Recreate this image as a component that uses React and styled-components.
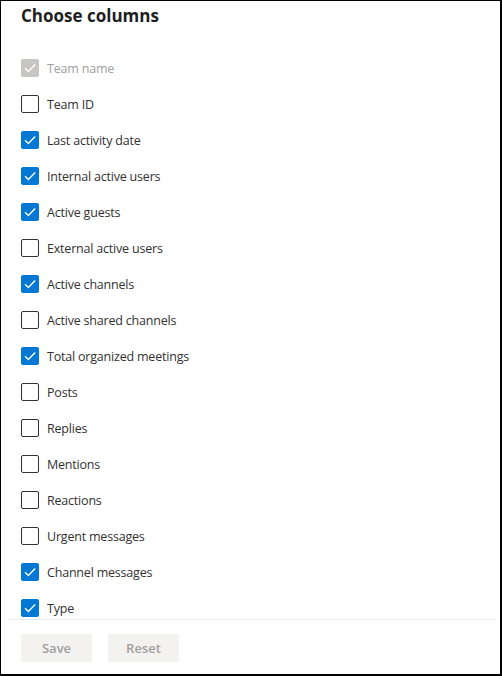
import React, { useState } from 'react'
import styled, { createGlobalStyle } from 'styled-components'

const GlobalStyle = createGlobalStyle`
html, body {
    margin: 0;
    padding: 0;
    background: #ffffff;
}
body {
    font-family: 'Open Sans', 'Liberation Sans', sans-serif;
    color: #323130;
}
`

const Panel = styled.div`
box-sizing: border-box;
width: 502px;
height: 676px;
display: flex;
flex-direction: column;
background: #ffffff;
border-style: solid;
border-color: #000000;
border-width: 1px 2px 2px 1px;
overflow: hidden;
`

const Header = styled.div`
height: 49px;
flex: none;
padding: 3px 0 0 20px;
box-sizing: border-box;
h1{
    margin: 0;
    font-size: 17px;
    line-height: 24px;
    font-weight: 700;
    color: #201f1e;
}
`

const List = styled.div`
flex: 1;
overflow: hidden;
`

const Row = styled.label`
display: flex;
align-items: center;
height: 36px;
padding-left: 20px;
gap: 8px;
cursor: ${props => props.disabled ? 'default' : 'pointer'};
font-size: 12.5px;
letter-spacing: -0.2px;
color: ${props => props.disabled ? '#a19f9d' : '#323130'};
`

const Box = styled.span`
box-sizing: border-box;
width: 18px;
height: 18px;
border-radius: 2px;
display: flex;
align-items: center;
justify-content: center;
border: 1px solid ${props => props.disabled ? '#c8c6c4' : props.checked ? '#0078d4' : '#323130'};
background: ${props => props.disabled ? '#c8c6c4' : props.checked ? '#0078d4' : '#ffffff'};
`

const Footer = styled.div`
flex: none;
display: flex;
gap: 16px;
margin: 0 4px 0 7px;
padding: 14px 0 12px 13px;
border-top: 1px solid #edebe9;
`

const Button = styled.button`
width: 71px;
height: 28px;
border: none;
border-radius: 2px;
background: #f3f2f1;
color: #a19f9d;
font-family: 'Open Sans', 'Liberation Sans', sans-serif;
font-size: 13px;
font-weight: 600;
padding: 0;
`

const columns = [
    { name: 'Team name', checked: true, disabled: true },
    { name: 'Team ID', checked: false },
    { name: 'Last activity date', checked: true },
    { name: 'Internal active users', checked: true },
    { name: 'Active guests', checked: true },
    { name: 'External active users', checked: false },
    { name: 'Active channels', checked: true },
    { name: 'Active shared channels', checked: false },
    { name: 'Total organized meetings', checked: true },
    { name: 'Posts', checked: false },
    { name: 'Replies', checked: false },
    { name: 'Mentions', checked: false },
    { name: 'Reactions', checked: false },
    { name: 'Urgent messages', checked: false },
    { name: 'Channel messages', checked: true },
    { name: 'Type', checked: true },
]

const CheckMark = () => (
    <svg width='14' height='14' viewBox='0 0 12 12'>
        <path d='M1.8 6.2 L4.6 9 L10.4 3' fill='none' stroke='#ffffff' strokeWidth='1.2' />
    </svg>
)

export default function App() {
    const [items, setItems] = useState(columns)

    const toggle = (i) => {
        if (items[i].disabled) return
        const updated = [...items]
        updated[i] = { ...updated[i], checked: !updated[i].checked }
        setItems(updated)
    }

    return (
        <>
            <GlobalStyle />
            <Panel>
                <Header>
                    <h1>Choose columns</h1>
                </Header>
                <List>
                    {items.map((item, i) => (
                        <Row key={i} disabled={item.disabled} onClick={() => toggle(i)}>
                            <Box checked={item.checked} disabled={item.disabled}>
                                {item.checked ? <CheckMark /> : null}
                            </Box>
                            <span>{item.name}</span>
                        </Row>
                    ))}
                </List>
                <Footer>
                    <Button disabled>Save</Button>
                    <Button disabled>Reset</Button>
                </Footer>
            </Panel>
        </>
    )
}
